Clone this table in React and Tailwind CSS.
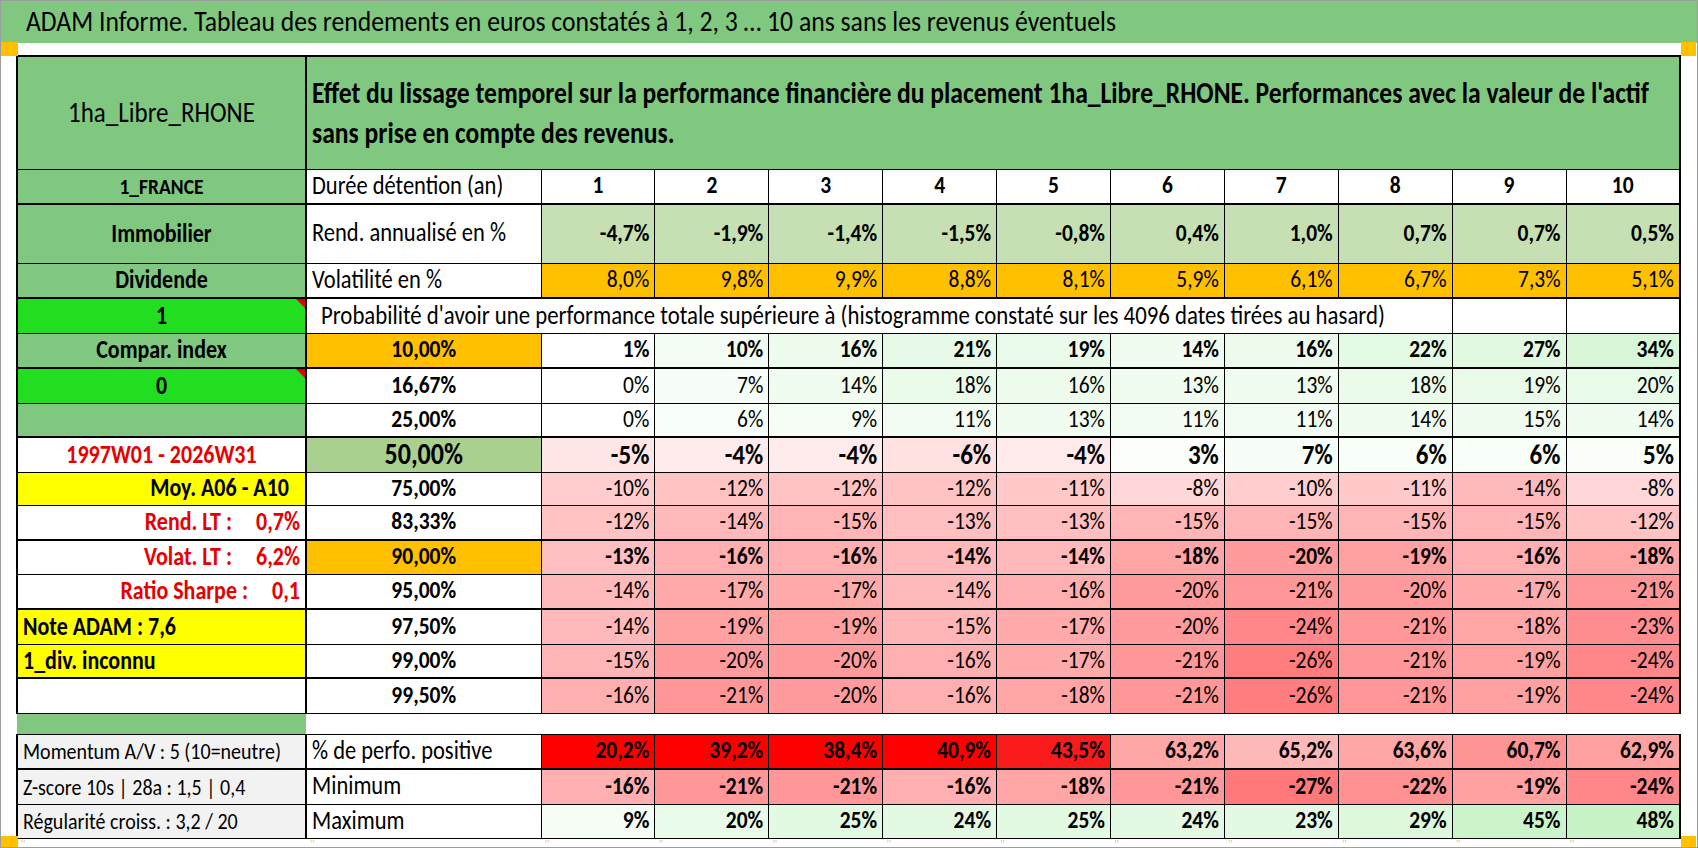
import React from 'react';

const B = 'border border-black p-0 whitespace-nowrap align-middle';
const G = 'bg-[#80c87f]';
const LIME = 'bg-[#21de21]';
const ORANGE = 'bg-[#ffc000]';
const YELLOW = 'bg-[#ffff00]';

const years = ['1', '2', '3', '4', '5', '6', '7', '8', '9', '10'];
const rend = ['-4,7%', '-1,9%', '-1,4%', '-1,5%', '-0,8%', '0,4%', '1,0%', '0,7%', '0,7%', '0,5%'];
const vol = ['8,0%', '9,8%', '9,9%', '8,8%', '8,1%', '5,9%', '6,1%', '6,7%', '7,3%', '5,1%'];

const probRows = [
  { label: '10,00%', bg: ORANGE, bold: true, h: 'h-[35px]', thick: true, vals: [1, 10, 16, 21, 19, 14, 16, 22, 27, 34] },
  { label: '16,67%', bold: false, h: 'h-[35px]', vals: [0, 7, 14, 18, 16, 13, 13, 18, 19, 20] },
  { label: '25,00%', bold: false, h: 'h-[34px]', thick: true, vals: [0, 6, 9, 11, 13, 11, 11, 14, 15, 14] },
  { label: '50,00%', bg: 'bg-[#a9d08e]', bold: true, big: true, h: 'h-[35px]', vals: [-5, -4, -4, -6, -4, 3, 7, 6, 6, 5] },
  { label: '75,00%', bold: false, h: 'h-[33px]', vals: [-10, -12, -12, -12, -11, -8, -10, -11, -14, -8] },
  { label: '83,33%', bold: false, h: 'h-[35px]', thick: true, vals: [-12, -14, -15, -13, -13, -15, -15, -15, -15, -12] },
  { label: '90,00%', bg: ORANGE, bold: true, h: 'h-[34px]', vals: [-13, -16, -16, -14, -14, -18, -20, -19, -16, -18] },
  { label: '95,00%', bold: false, h: 'h-[35px]', thick: true, vals: [-14, -17, -17, -14, -16, -20, -21, -20, -17, -21] },
  { label: '97,50%', bold: false, h: 'h-[35px]', vals: [-14, -19, -19, -15, -17, -20, -24, -21, -18, -23] },
  { label: '99,00%', bold: false, h: 'h-[34px]', thick: true, vals: [-15, -20, -20, -16, -17, -21, -26, -21, -19, -24] },
  { label: '99,50%', bold: false, h: 'h-[35px]', vals: [-16, -21, -20, -16, -18, -21, -26, -21, -19, -24] },
];

const perfPos = ['20,2%', '39,2%', '38,4%', '40,9%', '43,5%', '63,2%', '65,2%', '63,6%', '60,7%', '62,9%'];
const perfPosBg = ['#ff0000', '#ff0000', '#ff0000', '#ff0000', '#f91b1b', '#ffa6a6', '#ffb8b8', '#ffa6a6', '#ff9494', '#ffa1a1'];
const minimum = [-16, -21, -21, -16, -18, -21, -27, -22, -19, -24];
const maximum = [9, 20, 25, 24, 25, 24, 23, 29, 45, 48];

// rouge -> blanc -> vert, comme la mise en forme conditionnelle d'Excel
function heat(v) {
  if (v < 0) {
    const t = Math.min(1, -v / 30);
    return `rgb(255, ${Math.round(255 - 150 * t)}, ${Math.round(255 - 148 * t)})`;
  }
  const t = Math.min(1, v / 50);
  return `rgb(${Math.round(255 - 58 * t)}, ${Math.round(255 - 12 * t)}, ${Math.round(255 - 58 * t)})`;
}

const Txt = ({ children }) => <span className="inline-block scale-y-[1.15]">{children}</span>;

const Corner = () => (
  <span className="absolute top-0 right-0 w-0 h-0 border-l-[9px] border-l-transparent border-t-[9px] border-t-[#e00000]" />
);

function ValueCell({ children, bg, style, bold, big, thick, last }) {
  return (
    <td
      className={`${B} ${bg || ''} ${thick ? 'border-b-2' : ''} ${last ? 'border-r-2' : ''} text-right pr-[5px] ${bold ? 'font-bold' : ''} ${big ? 'text-[25px]' : 'text-[21.5px]'}`}
      style={style}
    >
      <Txt>{children}</Txt>
    </td>
  );
}

function Col1({ className, children, align = 'text-center', thick, extra = '' }) {
  return (
    <td className={`${B} border-l-2 border-r-2 ${thick ? 'border-b-2' : ''} ${align} ${className} ${extra}`}>
      {children}
    </td>
  );
}

export default function App() {
  const col1Prob = [
    <Col1 key="0" className={`${G} text-[22px] font-bold`} thick><Txt>Compar. index</Txt></Col1>,
    <Col1 key="1" className={`${LIME} text-[22px] font-bold`} extra="relative"><Txt>0</Txt><Corner /></Col1>,
    <Col1 key="2" className={G} thick>{''}</Col1>,
    <Col1 key="3" className="bg-white text-[#e60000] text-[22px] font-bold"><Txt>1997W01 - 2026W31</Txt></Col1>,
    <Col1 key="4" className={`${YELLOW} text-[22px] font-bold pr-[16px]`} align="text-right"><Txt>Moy. A06 - A10</Txt></Col1>,
    <Col1 key="5" className="bg-white text-[#e60000] text-[22px] font-bold pr-[5px]" align="text-right" thick>
      <Txt>Rend. LT :<span className="ml-[24px]">0,7%</span></Txt>
    </Col1>,
    <Col1 key="6" className="bg-white text-[#e60000] text-[22px] font-bold pr-[5px]" align="text-right">
      <Txt>Volat. LT :<span className="ml-[24px]">6,2%</span></Txt>
    </Col1>,
    <Col1 key="7" className="bg-white text-[#e60000] text-[22px] font-bold pr-[5px]" align="text-right" thick>
      <Txt>Ratio Sharpe :<span className="ml-[24px]">0,1</span></Txt>
    </Col1>,
    <Col1 key="8" className={`${YELLOW} text-[22px] font-bold pl-[5px]`} align="text-left"><Txt>Note ADAM : 7,6</Txt></Col1>,
    <Col1 key="9" className={`${YELLOW} text-[22px] font-bold pl-[5px]`} align="text-left" thick><Txt>1_div. inconnu</Txt></Col1>,
    <Col1 key="10" className="bg-white">{''}</Col1>,
  ];

  return (
    <div className="relative w-[1698px] h-[848px] bg-white border border-[#9d9d9d] overflow-hidden font-['Carlito','Liberation_Sans',sans-serif] text-black">
      {/* titre */}
      <div className={`h-[42px] ${G} flex items-center pl-[25px]`}>
        <span className="inline-block scale-y-[1.15] text-[25.7px] leading-none">
          ADAM Informe. Tableau des rendements en euros constatés à 1, 2, 3 … 10 ans sans les revenus éventuels
        </span>
      </div>
      <div className="h-[12px]" />

      <div className="pl-[15px]">
        <table className="table-fixed border-collapse w-[1663px] leading-[1.1]">
          <colgroup>
            <col className="w-[289px]" />
            <col className="w-[235px]" />
            {years.map((y) => (
              <col key={y} className="w-[113.9px]" />
            ))}
          </colgroup>
          <tbody>
            <tr className="h-[113px]">
              <td className={`${B} border-t-2 border-l-2 border-r-2 ${G} text-center text-[25px]`}>
                <Txt>1ha_Libre_RHONE</Txt>
              </td>
              <td colSpan={11} className={`${B} border-t-2 border-r-2 ${G} pl-[5px] text-[25.6px] font-bold`}>
                <span className="inline-block scale-y-[1.15] leading-[35px]">
                  Effet du lissage temporel sur la performance financière du placement 1ha_Libre_RHONE. Performances avec la valeur de l'actif
                  <br />
                  sans prise en compte des revenus.
                </span>
              </td>
            </tr>

            <tr className="h-[35px]">
              <Col1 className={`${G} text-[19.5px] font-bold`} thick><Txt>1_FRANCE</Txt></Col1>
              <td className={`${B} border-b-2 bg-white pl-[5px] text-[22.5px]`}><Txt>Durée détention (an)</Txt></td>
              {years.map((y, i) => (
                <td key={y} className={`${B} border-b-2 ${i === 9 ? 'border-r-2' : ''} bg-white text-center font-bold text-[21.5px]`}>
                  <Txt>{y}</Txt>
                </td>
              ))}
            </tr>

            <tr className="h-[59px]">
              <Col1 className={`${G} text-[22px] font-bold`}><Txt>Immobilier</Txt></Col1>
              <td className={`${B} bg-white pl-[5px] text-[22.5px]`}><Txt>Rend. annualisé en %</Txt></td>
              {rend.map((v, i) => (
                <ValueCell key={i} bg="bg-[#c6e0b4]" bold last={i === 9}>{v}</ValueCell>
              ))}
            </tr>

            <tr className="h-[35px]">
              <Col1 className={`${G} text-[22px] font-bold`} thick><Txt>Dividende</Txt></Col1>
              <td className={`${B} border-b-2 bg-white pl-[5px] text-[22.5px]`}><Txt>Volatilité en %</Txt></td>
              {vol.map((v, i) => (
                <ValueCell key={i} bg={ORANGE} thick last={i === 9}>{v}</ValueCell>
              ))}
            </tr>

            <tr className="h-[35px]">
              <Col1 className={`${LIME} text-[22px] font-bold`} extra="relative"><Txt>1</Txt><Corner /></Col1>
              <td colSpan={9} className={`${B} bg-white pl-[14px] text-[22.8px]`}>
                <Txt>Probabilité d'avoir une performance totale supérieure à (histogramme constaté sur les 4096 dates tirées au hasard)</Txt>
              </td>
              <td className={`${B} bg-white`} />
              <td className={`${B} border-r-2 bg-white`} />
            </tr>

            {probRows.map((r, ri) => (
              <tr key={r.label} className={r.h}>
                {col1Prob[ri]}
                <td className={`${B} ${r.thick ? 'border-b-2' : ''} ${r.bg || 'bg-white'} text-center font-bold ${r.big ? 'text-[26px]' : 'text-[21.5px]'}`}>
                  <Txt>{r.label}</Txt>
                </td>
                {r.vals.map((v, i) => (
                  <ValueCell key={i} bold={r.bold} big={r.big} thick={r.thick} last={i === 9} style={{ backgroundColor: heat(v) }}>
                    {`${v}%`}
                  </ValueCell>
                ))}
              </tr>
            ))}

            <tr className="h-[21px]">
              <td className={`p-0 ${G}`} />
              <td colSpan={11} className="p-0" />
            </tr>

            <tr className="h-[35px]">
              <Col1 className="bg-[#f2f2f2] text-[20px] pl-[5px] border-t" align="text-left" thick><Txt>Momentum A/V : 5 (10=neutre)</Txt></Col1>
              <td className={`${B} border-b-2 bg-white pl-[5px] text-[22.5px]`}><Txt>% de perfo. positive</Txt></td>
              {perfPos.map((v, i) => (
                <ValueCell key={i} bold thick last={i === 9} style={{ backgroundColor: perfPosBg[i] }}>{v}</ValueCell>
              ))}
            </tr>
            <tr className="h-[35px]">
              <Col1 className="bg-[#f2f2f2] text-[20px] pl-[5px]" align="text-left"><Txt>Z-score 10s | 28a : 1,5 | 0,4</Txt></Col1>
              <td className={`${B} bg-white pl-[5px] text-[22.5px]`}><Txt>Minimum</Txt></td>
              {minimum.map((v, i) => (
                <ValueCell key={i} bold last={i === 9} style={{ backgroundColor: heat(v) }}>{`${v}%`}</ValueCell>
              ))}
            </tr>
            <tr className="h-[34px]">
              <Col1 className="bg-[#f2f2f2] text-[20px] pl-[5px]" align="text-left"><Txt>Régularité croiss. : 3,2 / 20</Txt></Col1>
              <td className={`${B} bg-white pl-[5px] text-[22.5px]`}><Txt>Maximum</Txt></td>
              {maximum.map((v, i) => (
                <ValueCell key={i} bold last={i === 9} style={{ backgroundColor: heat(v) }}>{`${v}%`}</ValueCell>
              ))}
            </tr>
          </tbody>
        </table>

        {/* petites marques de saut de page sous les colonnes */}
        <div className="flex h-[8px] text-[10px] leading-none text-[#e9b949]">
          <div className="w-[289px] pl-[5px]">''</div>
          <div className="w-[235px] pl-[5px]">''</div>
          {years.map((y) => (
            <div key={y} className="w-[113.9px] pl-[5px]">''</div>
          ))}
        </div>
      </div>

      {/* petits repères orange aux coins */}
      <span className="absolute left-0 top-[41px] w-[17px] h-[14px] bg-[#ffc000]" />
      <span className="absolute left-[1680px] top-[41px] w-[15px] h-[14px] bg-[#ffc000]" />
      <span className="absolute left-0 bottom-0 w-[17px] h-[11px] bg-[#ffc000]" />
      <span className="absolute left-[1680px] bottom-0 w-[15px] h-[11px] bg-[#ffc000]" />
    </div>
  );
}
